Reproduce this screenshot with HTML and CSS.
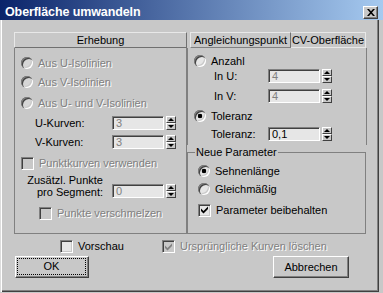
FILE: index.html
```html
<!DOCTYPE html>
<html lang="de">
<head>
  <meta charset="UTF-8" />
  <title>Oberfläche umwandeln</title>
  <link rel="stylesheet" href="styles.css">
</head>
<body>
  <div class="window">
    <div class="titlebar">
      <span class="title">Oberfläche umwandeln</span>
      <div class="close-btn">
        <svg viewBox="0 0 8 7" width="8" height="7"><path d="M0 0h2l2 2.3L6 0h2L5 3.5 8 7H6L4 4.7 2 7H0l3-3.5z"/></svg>
      </div>
    </div>

    <div class="client">
      <div class="columns">
        <div class="col-left">
          <div class="panel-head">Erhebung</div>
          <div class="panel">
            <div class="opt disabled m8"><span class="radio off"></span>Aus U-Isolinien</div>
            <div class="opt disabled m5"><span class="radio off"></span>Aus V-Isolinien</div>
            <div class="opt disabled m7"><span class="radio off"></span>Aus U- und V-Isolinien</div>
            <div class="opt m6">
              <span class="label lbl-kurven">U-Kurven:</span>
              <div class="spin"><div class="field">3</div><div class="arrows"><span class="arrow up"></span><span class="arrow down"></span></div></div>
            </div>
            <div class="opt m5">
              <span class="label lbl-kurven">V-Kurven:</span>
              <div class="spin"><div class="field">3</div><div class="arrows"><span class="arrow up"></span><span class="arrow down"></span></div></div>
            </div>
            <div class="opt disabled m7"><span class="check off"></span>Punktkurven verwenden</div>
            <div class="opt tall m4">
              <span class="label lbl-extra">Zusätzl. Punkte<br>pro Segment:</span>
              <div class="spin"><div class="field">0</div><div class="arrows"><span class="arrow up"></span><span class="arrow down"></span></div></div>
            </div>
            <div class="opt disabled m8 sub"><span class="check off"></span>Punkte verschmelzen</div>
          </div>
        </div>

        <div class="col-right">
          <div class="tabs">
            <div class="tab tab-match">Angleichungspunkt</div>
            <div class="tab tab-cv">CV-Oberfläche</div>
          </div>
          <div class="tab-panel">
            <div class="opt m6"><span class="radio"></span>Anzahl</div>
            <div class="opt m1">
              <span class="label lbl-in">In U:</span>
              <div class="spin"><div class="field">4</div><div class="arrows"><span class="arrow up"></span><span class="arrow down"></span></div></div>
            </div>
            <div class="opt m6">
              <span class="label lbl-in">In V:</span>
              <div class="spin"><div class="field">4</div><div class="arrows"><span class="arrow up"></span><span class="arrow down"></span></div></div>
            </div>
            <div class="opt m6"><span class="radio checked"></span>Toleranz</div>
            <div class="opt m4">
              <span class="label lbl-tol">Toleranz:</span>
              <div class="spin"><div class="field enabled">0,1</div><div class="arrows"><span class="arrow up"></span><span class="arrow down"></span></div></div>
            </div>
          </div>
          <fieldset class="group">
            <legend>Neue Parameter</legend>
            <div class="opt small m6"><span class="radio checked"></span>Sehnenlänge</div>
            <div class="opt small m6"><span class="radio"></span>Gleichmäßig</div>
            <div class="opt m8"><span class="check"><svg viewBox="0 0 7 8" width="7" height="8"><path d="M0 2.5l2.5 2.5L7 .5V3L2.5 7.5 0 5z"/></svg></span>Parameter beibehalten</div>
          </fieldset>
        </div>
      </div>

      <div class="options">
        <div class="opt preview"><span class="check"></span>Vorschau</div>
        <div class="opt disabled"><span class="check off grey"><svg viewBox="0 0 7 8" width="7" height="8"><path d="M0 2.5l2.5 2.5L7 .5V3L2.5 7.5 0 5z"/></svg></span>Ursprüngliche Kurven löschen</div>
      </div>

      <div class="buttons">
        <div class="btn btn-ok"><span class="focus">OK</span></div>
        <div class="btn btn-cancel">Abbrechen</div>
      </div>
    </div>
  </div>
</body>
</html>
```

FILE: styles.css
```css
html, body {
  margin: 0;
  background: #c8c8c8;
  font-family: 'Liberation Sans', Arial, sans-serif;
  font-size: 11px;
  line-height: 13px;
  color: #000;
}

.window {
  width: 383px;
  height: 293px;
  overflow: hidden;
}

/* title bar */

.titlebar {
  height: 20px;
  box-sizing: border-box;
  padding: 5px 5px 0 5px;
  display: flex;
  justify-content: space-between;
  align-items: flex-start;
  background: linear-gradient(to right, #0a246a, #a6caf0);
}

.title {
  color: #fff;
  font-weight: bold;
  font-size: 12.5px;
  line-height: 14px;
  letter-spacing: -0.1px;
}

.close-btn {
  width: 15px;
  height: 13px;
  margin-top: 1px;
  box-sizing: border-box;
  background: #c8c8c8;
  border: 1px solid;
  border-color: #fff #404040 #404040 #fff;
  box-shadow: inset -1px -1px #808080;
  display: flex;
  align-items: center;
  justify-content: center;
}

/* client area */

.client {
  width: 379px;
  height: 272px;
  box-sizing: border-box;
  padding: 12px 0 0 14px;
  box-shadow: inset 1px 0 #dcdcdc, inset 2px 0 #fff, inset -1px -1px #404040, inset -2px -2px #808080;
}

.columns {
  display: flex;
  align-items: flex-start;
}

.col-left {
  width: 173px;
}

.col-right {
  width: 180px;
}

.panel-head {
  height: 16px;
  box-sizing: border-box;
  border: 1px solid;
  border-color: #e8e8e8 #707070 #707070 #e8e8e8;
  text-align: center;
  line-height: 14px;
}

.panel {
  height: 186px;
  box-sizing: border-box;
  border: 1px solid #808080;
  border-top: 0;
  padding-left: 6px;
  display: flex;
  flex-direction: column;
}

/* tabs */

.tabs {
  display: flex;
  height: 16px;
  padding-left: 3px;
}

.tab {
  height: 16px;
  box-sizing: border-box;
  border: 1px solid;
  line-height: 14px;
  text-align: center;
}

.tab-match {
  width: 101px;
  border-color: #e8e8e8 #707070 #808080 #e8e8e8;
}

.tab-cv {
  width: 75px;
  border-color: #e8e8e8;
  border-left: 0;
}

.tab-panel {
  height: 97px;
  box-sizing: border-box;
  border-left: 1px solid #808080;
  border-right: 1px solid #808080;
  padding-left: 6px;
  display: flex;
  flex-direction: column;
}

.group {
  width: 179px;
  height: 88px;
  min-width: 0;
  box-sizing: border-box;
  margin: 1px 0 0;
  padding: 0 0 0 7px;
  border: 1px solid #808080;
}

.group legend {
  padding: 0 1px;
  line-height: 13px;
}

.group .opt {
  padding-left: 3px;
}

/* rows */

.opt {
  display: flex;
  align-items: center;
  height: 14px;
  white-space: nowrap;
}

.opt.small {
  height: 12px;
}

.opt.tall {
  height: 24px;
  align-items: flex-end;
}

.opt.sub {
  padding-left: 18px;
}

.m1 { margin-top: 1px; }
.m4 { margin-top: 4px; }
.m5 { margin-top: 5px; }
.m6 { margin-top: 6px; }
.m7 { margin-top: 7px; }
.m8 { margin-top: 8px; }

.disabled {
  color: #808080;
  text-shadow: 1px 1px #fff;
}

.label {
  flex: none;
}

.lbl-kurven {
  margin-left: 14px;
  width: 77px;
}

.lbl-extra {
  width: 82px;
  margin-right: 9px;
  text-align: right;
  line-height: 12px;
  color: #000;
}

.lbl-in {
  margin-left: 20px;
  width: 54px;
}

.lbl-tol {
  margin-left: 17px;
  width: 57px;
}

/* radios and checkboxes */

.radio {
  flex: none;
  width: 12px;
  height: 12px;
  margin-right: 5px;
  border-radius: 50%;
  background: #e6e6e6;
  box-shadow: inset 1px 1px #808080, inset 2px 2px #404040, inset -1px -1px #fff, inset -2px -2px #c8c8c8;
}

.radio.off {
  background: #d6d6d6;
}

.radio.checked {
  background: radial-gradient(circle at 6px 6px, #000 2px, #e6e6e6 2.6px);
}

.check {
  flex: none;
  width: 13px;
  height: 13px;
  margin-right: 5px;
  box-sizing: border-box;
  background: #e6e6e6;
  border: 1px solid;
  border-color: #808080 #fff #fff #808080;
  box-shadow: inset 1px 1px #404040, inset -1px -1px #c8c8c8;
  display: flex;
  align-items: center;
  justify-content: center;
}

.check.off {
  background: #c8c8c8;
}

.check svg {
  fill: #000;
}

.check.grey svg {
  fill: #808080;
}

/* spinners */

.spin {
  display: flex;
  align-items: center;
  text-shadow: none;
}

.field {
  width: 52px;
  height: 14px;
  box-sizing: border-box;
  padding-left: 3px;
  line-height: 12px;
  background: #e6e6e6;
  color: #808080;
  border: 1px solid;
  border-color: #808080 #fff #fff #808080;
  box-shadow: inset 1px 1px #404040;
}

.field.enabled {
  color: #000;
}

.arrows {
  margin-left: 2px;
  width: 10px;
  height: 14px;
  display: flex;
  flex-direction: column;
}

.arrow {
  flex: 1;
  box-sizing: border-box;
  background: #c8c8c8;
  border: 1px solid;
  border-color: #fff #404040 #404040 #fff;
  display: flex;
  align-items: center;
  justify-content: center;
}

.arrow::after {
  content: '';
  border-left: 3px solid transparent;
  border-right: 3px solid transparent;
}

.arrow.up::after { border-bottom: 3px solid #000; }
.arrow.down::after { border-top: 3px solid #000; }

/* bottom area */

.options {
  display: flex;
  margin-top: 6px;
  padding-left: 46px;
}

.options .opt {
  height: 13px;
}

.preview {
  width: 102px;
}

.buttons {
  display: flex;
  justify-content: space-between;
  width: 334px;
  margin: 3px 0 0 1px;
}

.btn {
  height: 22px;
  box-sizing: border-box;
  background: #c8c8c8;
  border: 1px solid;
  border-color: #fff #404040 #404040 #fff;
  box-shadow: inset -1px -1px #808080;
  display: flex;
  align-items: center;
  justify-content: center;
}

.btn-ok {
  width: 74px;
  align-items: stretch;
  padding: 1px 2px 2px 1px;
}

.btn-ok .focus {
  flex: 1;
  border: 1px dotted #000;
  display: flex;
  align-items: center;
  justify-content: center;
}

.btn-cancel {
  width: 76px;
}
```
